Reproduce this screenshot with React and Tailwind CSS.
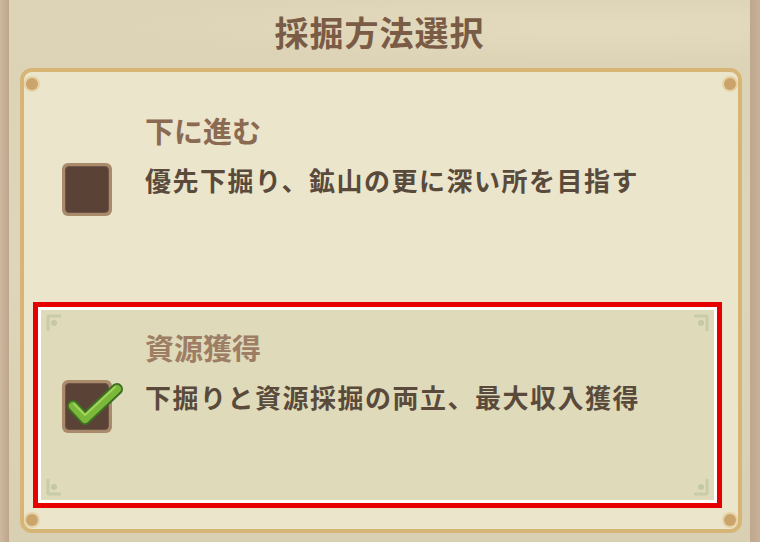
import React from "react";

const jp = { fontFamily: '"Noto Sans CJK JP", "Noto Sans", sans-serif' };

function Checkbox({ checked }) {
  return (
    <div className="relative w-[50px] h-[53px] shrink-0 rounded-[6px] bg-[#a98b6b] p-[3px]">
      <div className="w-full h-full rounded-[4px] bg-[#5a4237] border border-[#6e5446]" />
      {checked && (
        <svg className="absolute left-0 top-0 overflow-visible" width="50" height="53" viewBox="0 0 50 53">
          <path d="M11 26 L23 39 L55 9" fill="none" stroke="#3d6f22" strokeWidth="12" strokeLinecap="round" strokeLinejoin="round" />
          <path d="M11 26 L23 39 L55 9" fill="none" stroke="#7bb83a" strokeWidth="8" strokeLinecap="round" strokeLinejoin="round" />
          <path d="M12 24 L23 35 L53 7" fill="none" stroke="#a3d35c" strokeWidth="2" strokeLinecap="round" strokeLinejoin="round" />
        </svg>
      )}
    </div>
  );
}

function Corner({ className }) {
  return (
    <svg className={"absolute " + className} width="16" height="18" viewBox="0 0 16 18">
      <path d="M2 17 V3 Q2 2 3 2 H15" fill="none" stroke="#c9cca9" strokeWidth="3" />
      <circle cx="8" cy="9" r="3" fill="#c4c8a4" />
    </svg>
  );
}

function Option({ title, desc, checked }) {
  return (
    <div
      className={
        "relative h-[196px] border-[3px] pt-[20px] " +
        (checked
          ? "border-white bg-[#dfdab9] outline-[5px] outline-solid outline-[#e60000]"
          : "border-transparent")
      }
    >
      {checked && (
        <>
          <Corner className="left-[5px] top-[4px]" />
          <Corner className="right-[5px] top-[4px] -scale-x-100" />
          <Corner className="left-[5px] bottom-[4px] -scale-y-100" />
          <Corner className="right-[5px] bottom-[4px] -scale-100" />
        </>
      )}
      <div
        className={
          "pl-[104px] text-[29px] font-bold leading-[35px] " +
          (checked ? "text-[#9d7e65]" : "text-[#8b6a52]")
        }
      >
        {title}
      </div>
      <div className="flex items-start pl-[21px] mt-[15px]">
        <Checkbox checked={checked} />
        <div className="ml-[33px] mt-[1px] text-[26px] font-bold leading-[31px] tracking-[1.5px] text-[#5a4a3b]">
          {desc}
        </div>
      </div>
    </div>
  );
}

export default function App() {
  return (
    <div
      className="flex w-[760px] h-[542px] overflow-hidden bg-[#ddd4b8]"
      style={jp}
    >
      {/* 左の縁 */}
      <div className="w-[9px] shrink-0 bg-gradient-to-r from-[#cdb99f] to-[#bea58b]" />

      <div className="flex-1 flex flex-col bg-gradient-to-b from-[#dcd3b6] via-[#ded6ba] to-[#d9cfb2]">
        <div className="h-[68px] shrink-0 flex items-center justify-center pb-[4px] bg-[radial-gradient(ellipse_at_80%_40%,#e4dbbf_0%,#ddd4b8_60%)]">
          <h1 className="text-[34px] font-bold leading-none text-[#7a5b45] tracking-[1px]">採掘方法選択</h1>
        </div>

        <div className="relative ml-[11px] mr-[8px] h-[465px] rounded-[12px] border-[4px] border-[#d6b577] bg-[#ebe5cc] pl-[14px] pr-[21px] pt-[18px]">
          <span className="absolute left-[2px] top-[6px] w-[12px] h-[12px] rounded-full bg-[#cba46c] ring-2 ring-[#e6d3a6]" />
          <span className="absolute right-[2px] top-[6px] w-[12px] h-[12px] rounded-full bg-[#cba46c] ring-2 ring-[#e6d3a6]" />
          <span className="absolute left-[2px] bottom-[3px] w-[12px] h-[12px] rounded-full bg-[#cba46c] ring-2 ring-[#e6d3a6]" />
          <span className="absolute right-[2px] bottom-[3px] w-[12px] h-[12px] rounded-full bg-[#cba46c] ring-2 ring-[#e6d3a6]" />

          <div className="flex flex-col gap-[21px]">
            <Option title="下に進む" desc="優先下掘り、鉱山の更に深い所を目指す" />
            <Option title="資源獲得" desc="下掘りと資源採掘の両立、最大収入獲得" checked />
          </div>
        </div>
      </div>

      {/* 右の縁 */}
      <div className="w-[10px] shrink-0 bg-gradient-to-r from-[#bfa78d] to-[#c7b198]" />
    </div>
  );
}
